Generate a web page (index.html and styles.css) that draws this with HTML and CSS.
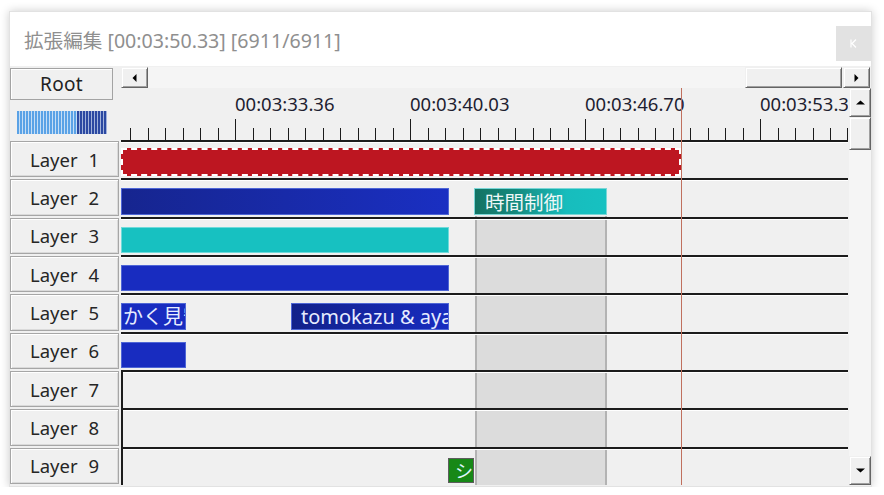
FILE: index.html
```html
<!DOCTYPE html>
<html lang="ja">
<head>
<meta charset="utf-8">
<title>拡張編集</title>
<link rel="stylesheet" href="styles.css">
</head>
<body>
<div class="window">
  <div class="titlebar">
    <span class="title">拡張編集 [00:03:50.33] [6911/6911]</span>
    <div class="close">
      <svg width="7" height="9" viewBox="0 0 7 9"><path d="M1 0.5V8.5M6 0.5L2 4.5L6 8.5" stroke="#fff" stroke-width="1.2" fill="none"/></svg>
    </div>
  </div>
  <div class="editor">
    <div class="corner">
      <div class="root-btn">Root</div>
      <div class="gauge"><span class="gauge-lo"></span><span class="gauge-hi"></span></div>
    </div>

    <div class="hscroll">
      <div class="sbtn hbtn"><svg width="5" height="8" viewBox="0 0 5 8"><polygon points="4.5,0 4.5,8 0.5,4" fill="#000"/></svg></div>
      <div class="strack"></div>
      <div class="sbtn hthumb"></div>
      <div class="sbtn hbtn"><svg width="5" height="8" viewBox="0 0 5 8"><polygon points="0.5,0 0.5,8 4.5,4" fill="#000"/></svg></div>
    </div>

    <div class="time-area">
      <div class="ruler">
        <span class="rlabel" style="left:114px">00:03:33.36</span>
        <span class="rlabel" style="left:289px">00:03:40.03</span>
        <span class="rlabel" style="left:464px">00:03:46.70</span>
        <span class="rlabel" style="left:639px">00:03:53.36</span>
        <svg class="ticks" width="727" height="22" viewBox="0 0 727 22" shape-rendering="crispEdges">
          <path stroke="#1c1c1c" stroke-width="1" fill="none" d="M9.5 10V22M27.5 10V22M44.5 10V22M62.5 10V22M79.5 10V22M97.5 10V22M132.5 10V22M149.5 10V22M167.5 10V22M184.5 10V22M202.5 10V22M219.5 10V22M237.5 10V22M254.5 10V22M272.5 10V22M307.5 10V22M324.5 10V22M342.5 10V22M359.5 10V22M377.5 10V22M394.5 10V22M412.5 10V22M429.5 10V22M447.5 10V22M482.5 10V22M499.5 10V22M517.5 10V22M534.5 10V22M552.5 10V22M569.5 10V22M587.5 10V22M604.5 10V22M622.5 10V22M657.5 10V22M674.5 10V22M692.5 10V22M709.5 10V22M726.5 10V22"/>
          <path stroke="#1c1c1c" stroke-width="1" fill="none" d="M114.5 1V22M289.5 1V22M464.5 1V22M639.5 1V22"/>
        </svg>
      </div>
      <div class="range"></div>
      <div class="track"><div class="clip c-red"></div></div>
      <div class="track">
        <div class="clip c-blue c-grad" style="left:0;width:328px"></div>
        <div class="clip c-time" style="left:353px;width:133px">時間制御</div>
      </div>
      <div class="track"><div class="clip c-teal" style="left:0;width:328px"></div></div>
      <div class="track"><div class="clip c-blue" style="left:0;width:328px"></div></div>
      <div class="track">
        <div class="clip c-blue c-text" style="left:0;width:65px">かく見守る</div>
        <div class="clip c-blue c-dark c-text tomo" style="left:170px;width:158px">tomokazu &amp; aya</div>
      </div>
      <div class="track"><div class="clip c-blue" style="left:0;width:65px"></div></div>
      <div class="track empty"></div>
      <div class="track empty"></div>
      <div class="track empty"><div class="clip c-green" style="left:325px;width:26px">シ</div></div>
      <div class="cursor"></div>
    </div>

    <div class="vscroll">
      <div class="sbtn vbtn"><svg width="9" height="5" viewBox="0 0 9 5"><polygon points="0,4.5 9,4.5 4.5,0.5" fill="#000"/></svg></div>
      <div class="sbtn vthumb"></div>
      <div class="strack"></div>
      <div class="sbtn vbtn"><svg width="9" height="5" viewBox="0 0 9 5"><polygon points="0,0.5 9,0.5 4.5,4.5" fill="#000"/></svg></div>
    </div>

    <div class="headers">
      <div class="layer-btn">Layer 1</div>
      <div class="layer-btn">Layer 2</div>
      <div class="layer-btn">Layer 3</div>
      <div class="layer-btn">Layer 4</div>
      <div class="layer-btn">Layer 5</div>
      <div class="layer-btn">Layer 6</div>
      <div class="layer-btn">Layer 7</div>
      <div class="layer-btn">Layer 8</div>
      <div class="layer-btn">Layer 9</div>
    </div>
  </div>
</div>
</body>
</html>
```

FILE: styles.css
```css
* { box-sizing: border-box; }

body {
  margin: 0;
  background: #ffffff;
  font-family: "Noto Sans", "Noto Sans CJK JP", sans-serif;
}

.window {
  margin: 11px 0 0 9px;
  width: 863px;
  height: 476px;
  background: #ffffff;
  border: 1px solid #e2e2e2;
  box-shadow: 0 0 9px rgba(0, 0, 0, 0.2);
  display: flex;
  flex-direction: column;
}

.titlebar {
  height: 54px;
  flex: none;
  display: flex;
  align-items: center;
  padding-left: 14px;
}

.title {
  font-size: 19.6px;
  color: #8f8f8f;
  font-family: "Noto Sans", "Noto Sans CJK JP", sans-serif;
  white-space: nowrap;
}

.close {
  margin-left: auto;
  align-self: flex-start;
  margin-top: 14px;
  width: 35px;
  height: 35px;
  background: #e2e2e2;
  display: flex;
  align-items: center;
  justify-content: center;
}

.editor {
  flex: 1;
  background: #f0f0f0;
  display: grid;
  grid-template-columns: 111px 727px 23px;
  grid-template-rows: 22px 52px 345px;
}

.corner {
  grid-column: 1;
  grid-row: 1 / 3;
  padding-top: 2px;
}

.root-btn {
  width: 103px;
  height: 32px;
  border: 1px solid #a3a3a3;
  box-shadow: inset 1px 1px 0 #ffffff;
  background: #f0f0f0;
  display: flex;
  align-items: center;
  justify-content: center;
  font-size: 19px;
  color: #222;
  letter-spacing: 0.3px;
}

.gauge {
  margin: 11px 0 0 7px;
  width: 90px;
  height: 23px;
  display: flex;
}

.gauge-lo {
  width: 60px;
  background: repeating-linear-gradient(90deg, #5aa2e6 0 2px, #c6def5 2px 3px);
}

.gauge-hi {
  width: 30px;
  background: repeating-linear-gradient(90deg, #2c49a2 0 2px, #a2b2da 2px 3px);
}

/* scrollbars */
.sbtn {
  background: #f0f0f0;
  border: 1px solid;
  border-color: #f0f0f0 #646464 #646464 #f0f0f0;
  box-shadow: inset 1px 1px 0 #ffffff, inset -1px -1px 0 #a0a0a0;
  display: flex;
  align-items: center;
  justify-content: center;
  flex: none;
}

.strack {
  flex: 1;
  background: #f5f5f5;
}

.hscroll {
  grid-column: 2 / 4;
  grid-row: 1;
  display: flex;
  padding: 1px 1px 0 0;
}

.hbtn { width: 27px; }
.hthumb { width: 97px; margin-right: 1px; }

.vscroll {
  grid-column: 3;
  grid-row: 2 / 4;
  display: flex;
  flex-direction: column;
  padding-left: 1px;
}

.vbtn { height: 29px; }
.vthumb { height: 33px; }

/* timeline */
.time-area {
  grid-column: 2;
  grid-row: 2 / 4;
  position: relative;
  overflow: hidden;
  display: flex;
  flex-direction: column;
}

.ruler {
  height: 52px;
  flex: none;
  position: relative;
}

.rlabel {
  position: absolute;
  top: 4px;
  font-size: 18.5px;
  line-height: 24px;
  color: #1e1e30;
  white-space: nowrap;
}

.ticks {
  position: absolute;
  left: 0;
  bottom: 0;
  display: block;
}

.track {
  height: 38.35px;
  flex: none;
  position: relative;
  border-top: 2px solid #1c1c1c;
  box-shadow: inset 0 1px 0 #ffffff;
}

.track.empty { border-left: 2px solid #1c1c1c; }

.range {
  position: absolute;
  left: 354px;
  width: 132px;
  top: 128px;
  bottom: 0;
  background: #dcdcdc;
  border-left: 2px solid #b3b3b3;
  border-right: 2px solid #b3b3b3;
}

.cursor {
  position: absolute;
  left: 560px;
  top: 0;
  bottom: 0;
  width: 1px;
  background: #c0705e;
  z-index: 3;
}

.clip {
  position: absolute;
  top: 8px;
  bottom: 2px;
  overflow: hidden;
  white-space: nowrap;
  display: flex;
  align-items: center;
  font-size: 20px;
  line-height: 1.2;
  color: #e6ecff;
}

.c-red {
  left: 0;
  width: 560px;
  top: 6px;
  background: #bd1621;
  border: 2px dashed #ffffff;
}

.c-blue {
  background: #182cc0;
  border: 1px solid #4e66d6;
}

.c-grad { background: linear-gradient(90deg, #16258f, #1a2fc2); }
.c-dark { background: linear-gradient(90deg, #12218a, #182cc0); }

.c-text { padding-left: 1px; }
.tomo { padding-left: 9px; }

.c-teal {
  background: #17c1c1;
  border: 1px solid #6fdada;
}

.c-time {
  padding-left: 10px;
  background: linear-gradient(90deg, #137363 0%, #15887c 30%, #17bdbd 70%, #17c1c1 100%);
  border: 1px solid #7ad6d6;
  color: #eef8f8;
  font-size: 19.5px;
  font-family: "Noto Sans CJK JP", sans-serif;
}

.c-green {
  top: 9px;
  padding-left: 6px;
  background: #178817;
  border: 1px solid #5d5d5d;
  font-size: 18px;
  color: #dff6ff;
  font-family: "Noto Sans CJK JP", sans-serif;
}

/* layer headers */
.headers {
  grid-column: 1;
  grid-row: 3;
  display: flex;
  flex-direction: column;
}

.layer-btn {
  height: 36.35px;
  margin: 1px 2px 1px 0;
  flex: none;
  border: 1px solid #a6a6a6;
  box-shadow: inset 1px 1px 0 #ffffff, inset -1px -1px 0 #dadada;
  background: #f0f0f0;
  display: flex;
  align-items: center;
  justify-content: center;
  font-size: 18.5px;
  color: #262626;
  word-spacing: 6px;
}
```
